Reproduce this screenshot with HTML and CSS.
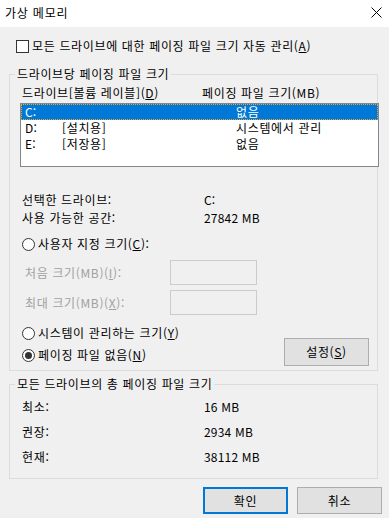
FILE: index.html
```html
<!DOCTYPE html>
<html lang="ko">
<head>
<meta charset="utf-8">
<link rel="stylesheet" href="styles.css">
</head>
<body>
<div class="dialog">
  <div class="titlebar">
    <span class="title">가상 메모리</span>
    <svg class="close" width="11" height="11" viewBox="0 0 11 11"><path d="M0.5 0.5 L10.5 10.5 M10.5 0.5 L0.5 10.5" stroke="#000" stroke-width="1" fill="none"/></svg>
  </div>
  <div class="main">
    <label class="check-row"><span class="checkbox"></span>모든 드라이브에 대한 페이징 파일 크기 자동 관리(<u>A</u>)</label>

    <fieldset class="group group-drive">
      <legend>드라이브당 페이징 파일 크기</legend>
      <div class="list-head">
        <span class="col-drive">드라이브[볼륨 레이블](<u>D</u>)</span>
        <span class="col-size">페이징 파일 크기(MB)</span>
      </div>
      <div class="listbox">
        <div class="lrow selected"><span class="c1">C:</span><span class="c2"></span><span class="c3">없음</span></div>
        <div class="lrow"><span class="c1">D:</span><span class="c2">[설치용]</span><span class="c3">시스템에서 관리</span></div>
        <div class="lrow"><span class="c1">E:</span><span class="c2">[저장용]</span><span class="c3">없음</span></div>
      </div>
      <div class="info">
        <div class="info-row"><span class="k">선택한 드라이브:</span><span class="v">C:</span></div>
        <div class="info-row"><span class="k">사용 가능한 공간:</span><span class="v">27842 MB</span></div>
      </div>
      <div class="radio-row custom"><span class="radio"></span>사용자 지정 크기(<u>C</u>):</div>
      <div class="size-row first"><span class="dis">처음 크기(MB)(<u>I</u>):</span><span class="input"></span></div>
      <div class="size-row"><span class="dis">최대 크기(MB)(<u>X</u>):</span><span class="input"></span></div>
      <div class="bottom-row">
        <div class="radios">
          <div class="radio-row"><span class="radio"></span>시스템이 관리하는 크기(<u>Y</u>)</div>
          <div class="radio-row"><span class="radio on"></span>페이징 파일 없음(<u>N</u>)</div>
        </div>
        <button class="btn set">설정(<u>S</u>)</button>
      </div>
    </fieldset>

    <fieldset class="group group-total">
      <legend>모든 드라이브의 총 페이징 파일 크기</legend>
      <div class="total-row"><span class="k">최소:</span><span class="v">16 MB</span></div>
      <div class="total-row"><span class="k">권장:</span><span class="v">2934 MB</span></div>
      <div class="total-row"><span class="k">현재:</span><span class="v">38112 MB</span></div>
    </fieldset>

    <div class="actions">
      <button class="btn default">확인</button>
      <button class="btn">취소</button>
    </div>
  </div>
</div>
</body>
</html>
```
FILE: styles.css
```css
* { box-sizing: border-box; }
html, body { margin: 0; padding: 0; }
body {
  width: 389px;
  height: 518px;
  background: #f0f0f0;
  font-family: "Noto Sans CJK KR", "Noto Sans", sans-serif;
  font-size: 12px;
  line-height: 16px;
  letter-spacing: 0.65px;
  color: #000;
  overflow: hidden;
}
u { text-decoration: underline; text-underline-offset: 1px; }
.v, .c1 { letter-spacing: 0.2px; }

.titlebar {
  height: 27px;
  background: #fff;
  display: flex;
  align-items: center;
  justify-content: space-between;
  padding: 0 7px 2px 5px;
}
.title { font-size: 12px; letter-spacing: 0.8px; }
.close { display: block; }

.main { padding-left: 9px; }

.check-row {
  display: flex;
  align-items: center;
  height: 16px;
  margin-top: 11px;
  padding-left: 7px;
}
.checkbox {
  width: 13px;
  height: 13px;
  border: 1px solid #333;
  background: #fff;
  margin-right: 3px;
}

.group {
  margin: 0;
  padding: 0;
  width: 369px;
  border: 1px solid #dcdcdc;
  min-width: 0;
}
.group legend {
  margin-left: 5px;
  padding: 0 2px;
  line-height: 16px;
}
.group-drive { margin-top: 12px; height: 305px; }

.list-head {
  display: flex;
  height: 16px;
  margin-top: 3px;
  padding-left: 12px;
}
.col-drive { width: 180px; }

.listbox {
  margin-top: 2px;
  margin-left: 10px;
  width: 359px;
  height: 64px;
  border: 1px solid #82878f;
  background: #fff;
}
.lrow {
  display: flex;
  height: 16px;
  line-height: 16px;
  padding-left: 4px;
}
.lrow.selected {
  background: #0078d7;
  color: #fff;
  outline: 1px dotted #f5a623;
  outline-offset: -1px;
}
.c1 { width: 37px; }
.c2 { width: 174px; }

.info { margin-top: 25px; padding-left: 12px; }
.info-row { display: flex; height: 18px; line-height: 16px; }
.info-row .k, .total-row .k { width: 182px; }

.radio-row {
  display: flex;
  align-items: center;
  height: 18px;
  padding-left: 12px;
}
.radio {
  width: 13px;
  height: 13px;
  border: 1px solid #333;
  border-radius: 50%;
  background: #fff;
  margin-right: 3px;
  display: flex;
  align-items: center;
  justify-content: center;
}
.radio.on::after {
  content: "";
  width: 7px;
  height: 7px;
  border-radius: 50%;
  background: #333;
}
.custom { margin-top: 7px; }

.size-row {
  display: flex;
  align-items: center;
  height: 25px;
  padding-left: 15px;
  margin-top: 5px;
}
.size-row.first { margin-top: 7px; }
.dis { color: #a0a0a0; width: 145px; }
.input {
  width: 87px;
  height: 25px;
  border: 1px solid #cccccc;
  background: #f0f0f0;
}

.bottom-row {
  display: flex;
  align-items: flex-end;
  justify-content: space-between;
  margin-top: 7px;
  padding-right: 8px;
}
.radios .radio-row { height: 22px; }

.btn {
  font-family: inherit;
  font-size: 12px;
  line-height: 16px;
  letter-spacing: 0.65px;
  color: #000;
  width: 85px;
  height: 27px;
  background: #e1e1e1;
  border: 1px solid #adadad;
  padding: 0;
  margin: 0;
}
.btn.set { height: 28px; }
.btn.default { border: 2px solid #0078d7; }

.group-total { margin-top: 5px; height: 103px; }
.total-row { display: flex; height: 24px; align-items: center; padding-left: 12px; }
.group-total legend + .total-row { margin-top: 3px; }
.total-row + .total-row { margin-top: 1px; }

.actions {
  display: flex;
  justify-content: flex-end;
  gap: 9px;
  margin-top: 8px;
  padding-right: 7px;
  width: 380px;
}
```
